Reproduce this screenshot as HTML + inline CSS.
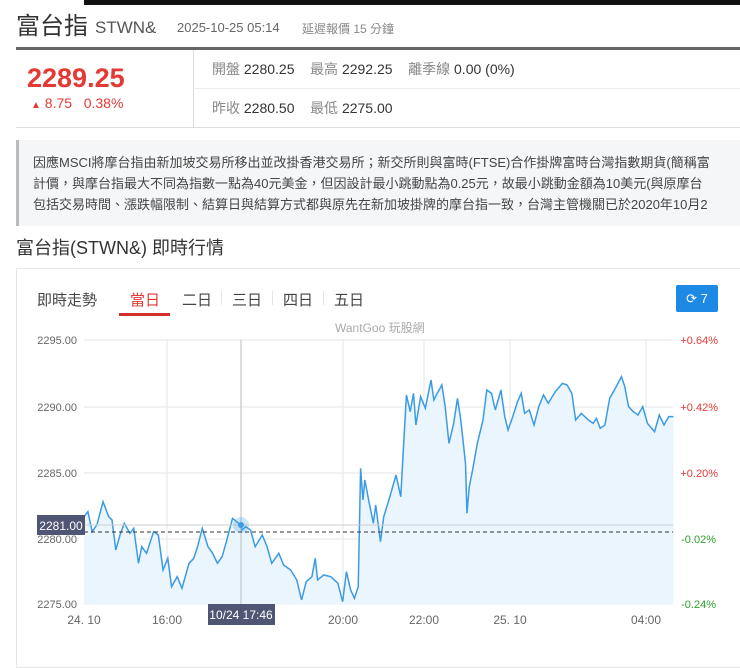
<!DOCTYPE html>
<html><head><meta charset="utf-8"><style>
*{margin:0;padding:0;box-sizing:border-box}
body{width:740px;height:653px;overflow:hidden;background:#fff;font-family:"Liberation Sans","Noto Sans CJK TC",sans-serif;color:#333;position:relative}
.a{position:absolute;white-space:nowrap}
</style></head><body>
<div class="a" style="left:84px;top:0;width:656px;height:5px;background:#111"></div>
<div class="a" style="left:16px;top:13px;font-size:24px;line-height:28px;color:#333">富台指</div>
<div class="a" style="left:95px;top:17px;font-size:17px;line-height:22px;color:#555">STWN&amp;</div>
<div class="a" style="left:177px;top:20px;font-size:13px;line-height:16px;color:#666">2025-10-25 05:14</div>
<div class="a" style="left:302px;top:21px;font-size:12px;line-height:16px;color:#888">延遲報價 15 分鐘</div>
<div class="a" style="left:16px;top:47px;width:724px;height:3px;background:#666"></div>
<div class="a" style="left:16px;top:127px;width:724px;height:1px;background:#ddd"></div>
<div class="a" style="left:193px;top:50px;width:1px;height:78px;background:#ddd"></div>
<div class="a" style="left:193px;top:88px;width:547px;height:1px;background:#eee"></div>
<div class="a" style="left:27px;top:63px;font-size:27px;font-weight:bold;color:#e53935;line-height:30px">2289.25</div>
<div class="a" style="left:31px;top:95px;font-size:14px;line-height:16px;color:#e53935"><span style="font-size:10px">▲</span> 8.75&nbsp;&nbsp; 0.38%</div>
<div class="a" style="left:212px;top:61px;font-size:14px;line-height:16px"><span style="color:#888">開盤</span> 2280.25 &nbsp;&nbsp;&nbsp;<span style="color:#888">最高</span> 2292.25 &nbsp;&nbsp;&nbsp;<span style="color:#888">離季線</span> 0.00 (0%)</div>
<div class="a" style="left:212px;top:100px;font-size:14px;line-height:16px"><span style="color:#888">昨收</span> 2280.50 &nbsp;&nbsp;&nbsp;<span style="color:#888">最低</span> 2275.00</div>
<div class="a" style="left:16px;top:140px;width:724px;height:86px;background:#f5f6f8;border-left:3px solid #bbb"></div>
<div class="a" style="left:33px;top:152px;font-size:13px;line-height:21px;color:#444">因應MSCI將摩台指由新加坡交易所移出並改掛香港交易所；新交所則與富時(FTSE)合作掛牌富時台灣指數期貨(簡稱富<br>計價，與摩台指最大不同為指數一點為40元美金，但因設計最小跳動點為0.25元，故最小跳動金額為10美元(與原摩台<br>包括交易時間、漲跌幅限制、結算日與結算方式都與原先在新加坡掛牌的摩台指一致，台灣主管機關已於2020年10月2</div>
<div class="a" style="left:16px;top:234px;font-size:18px;color:#333">富台指(STWN&amp;) 即時行情</div>
<div class="a" style="left:16px;top:268px;width:730px;height:400px;border:1px solid #e6e6e6"></div>
<div class="a" style="left:37px;top:289px;font-size:15px;color:#444">即時走勢</div>
<div class="a" style="left:130px;top:289px;font-size:15px;color:#e53935">當日</div>
<div class="a" style="left:119px;top:313px;width:51px;height:3px;background:#d32f2f"></div>
<div class="a" style="left:182px;top:289px;font-size:15px;color:#444">二日</div>
<div class="a" style="left:232px;top:289px;font-size:15px;color:#444">三日</div>
<div class="a" style="left:283px;top:289px;font-size:15px;color:#444">四日</div>
<div class="a" style="left:334px;top:289px;font-size:15px;color:#444">五日</div>
<div class="a" style="left:221px;top:291px;width:1px;height:14px;background:#e5e5e5"></div>
<div class="a" style="left:272px;top:291px;width:1px;height:14px;background:#e5e5e5"></div>
<div class="a" style="left:323px;top:291px;width:1px;height:14px;background:#e5e5e5"></div>
<div class="a" style="left:676px;top:285px;width:42px;height:27px;background:#1e88e5;border-radius:2px;color:#fff;font-size:13px;text-align:center;line-height:27px">⟳ 7</div>
<div class="a" style="left:335px;top:319px;font-size:12px;color:#aaa">WantGoo 玩股網</div>
<svg class="a" style="left:0;top:0" width="740" height="653">
<g stroke="#e6e6e6" stroke-width="1">
<line x1="84" y1="340" x2="673" y2="340"/><line x1="84" y1="407" x2="673" y2="407"/><line x1="84" y1="473" x2="673" y2="473"/><line x1="84" y1="539" x2="673" y2="539"/><line x1="84" y1="604" x2="673" y2="604"/>
<line x1="167" y1="340" x2="167" y2="604"/><line x1="343" y1="340" x2="343" y2="604"/><line x1="424" y1="340" x2="424" y2="604"/><line x1="510" y1="340" x2="510" y2="604"/><line x1="646" y1="340" x2="646" y2="604"/>
</g>
<g transform="translate(0,360) scale(0.4726,0.3333)">
<path fill="#eaf5fd" d="M178,470 186,455 195,515 205,495 218,425 230,470 237,480 245,570 255,520 263,490 275,520 283,505 293,610 300,560 310,580 325,515 335,525 345,630 355,595 363,680 375,650 385,685 400,610 410,595 418,560 428,505 440,560 450,580 460,610 470,590 480,540 492,475 505,490 512,510 520,500 530,510 540,560 555,525 565,560 575,610 590,580 600,615 615,630 628,660 638,720 648,665 660,650 667,595 672,660 685,645 700,650 715,670 725,725 733,635 742,690 750,715 758,680 763,325 768,420 772,360 780,420 790,490 795,435 805,545 812,470 825,410 838,345 848,410 855,230 860,105 868,155 875,100 880,195 890,110 900,145 912,60 918,120 925,100 935,75 942,140 950,250 960,190 968,115 975,180 985,310 988,460 993,380 1000,330 1010,250 1022,180 1030,90 1040,100 1048,150 1060,90 1068,170 1075,210 1085,170 1095,125 1103,100 1110,160 1120,150 1130,195 1140,140 1150,105 1160,130 1175,95 1190,70 1200,75 1210,100 1218,180 1230,160 1245,180 1255,190 1262,175 1270,205 1280,195 1290,115 1300,90 1315,50 1322,80 1330,140 1340,155 1350,165 1360,140 1370,190 1385,215 1395,165 1405,195 1415,170 1425,170 1425,733 178,733Z"/>
<path fill="none" stroke="#3b9be3" stroke-width="1.5" vector-effect="non-scaling-stroke" d="M178,470 186,455 195,515 205,495 218,425 230,470 237,480 245,570 255,520 263,490 275,520 283,505 293,610 300,560 310,580 325,515 335,525 345,630 355,595 363,680 375,650 385,685 400,610 410,595 418,560 428,505 440,560 450,580 460,610 470,590 480,540 492,475 505,490 512,510 520,500 530,510 540,560 555,525 565,560 575,610 590,580 600,615 615,630 628,660 638,720 648,665 660,650 667,595 672,660 685,645 700,650 715,670 725,725 733,635 742,690 750,715 758,680 763,325 768,420 772,360 780,420 790,490 795,435 805,545 812,470 825,410 838,345 848,410 855,230 860,105 868,155 875,100 880,195 890,110 900,145 912,60 918,120 925,100 935,75 942,140 950,250 960,190 968,115 975,180 985,310 988,460 993,380 1000,330 1010,250 1022,180 1030,90 1040,100 1048,150 1060,90 1068,170 1075,210 1085,170 1095,125 1103,100 1110,160 1120,150 1130,195 1140,140 1150,105 1160,130 1175,95 1190,70 1200,75 1210,100 1218,180 1230,160 1245,180 1255,190 1262,175 1270,205 1280,195 1290,115 1300,90 1315,50 1322,80 1330,140 1340,155 1350,165 1360,140 1370,190 1385,215 1395,165 1405,195 1415,170 1425,170"/>
</g>
<line x1="241" y1="340" x2="241" y2="604" stroke="#bbb"/>
<line x1="84" y1="525" x2="673" y2="525" stroke="#ccc"/>
<line x1="84" y1="532" x2="673" y2="532" stroke="#333" stroke-dasharray="4,3"/>
<circle cx="241" cy="525" r="8" fill="#3b9be3" opacity="0.25"/><circle cx="241" cy="525" r="3" fill="#3b9be3"/>
<g font-family="Liberation Sans" font-size="11" fill="#666" text-anchor="end">
<text x="77" y="344">2295.00</text><text x="77" y="411">2290.00</text><text x="77" y="477">2285.00</text><text x="77" y="543">2280.00</text><text x="77" y="608">2275.00</text></g>
<g font-family="Liberation Sans" font-size="11" text-anchor="end">
<text x="718" y="344" fill="#e53935">+0.64%</text><text x="718" y="411" fill="#e53935">+0.42%</text><text x="718" y="477" fill="#e53935">+0.20%</text><text x="716" y="543" fill="#2e9e2e">-0.02%</text><text x="716" y="608" fill="#2e9e2e">-0.24%</text></g>
<g font-family="Liberation Sans" font-size="12" fill="#666" text-anchor="middle">
<text x="84" y="624">24. 10</text><text x="167" y="624">16:00</text><text x="343" y="624">20:00</text><text x="424" y="624">22:00</text><text x="510" y="624">25. 10</text><text x="646" y="624">04:00</text></g>
<rect x="37" y="515" width="48" height="20" fill="#4f5573"/>
<text x="61" y="530" font-family="Liberation Sans" font-size="12" fill="#fff" text-anchor="middle">2281.00</text>
<rect x="208" y="604" width="67" height="21" fill="#4f5573"/>
<text x="241" y="619" font-family="Liberation Sans" font-size="12" fill="#fff" text-anchor="middle">10/24 17:46</text>
</svg>
</body></html>
